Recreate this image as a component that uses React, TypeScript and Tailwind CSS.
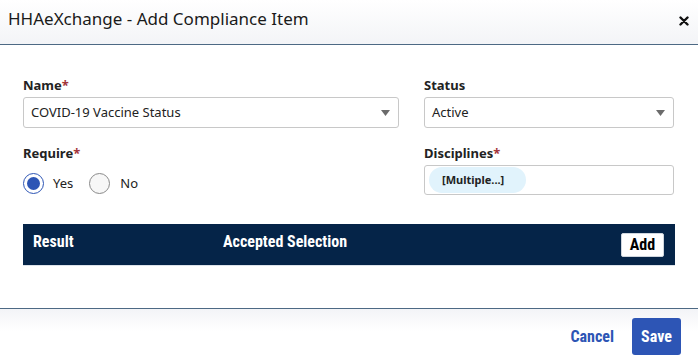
import React from "react";

const sans = { fontFamily: '"Noto Sans", "Open Sans", sans-serif' };
const narrow = { fontFamily: '"Liberation Sans Narrow", "Roboto Condensed", "Roboto", sans-serif' };

function Caret() {
  return (
    <svg width="9" height="6" viewBox="0 0 9 6" className="shrink-0">
      <path d="M0 0 H9 L4.5 6 Z" fill="#6b6b6b" />
    </svg>
  );
}

function Select({ value }: { value: string }) {
  return (
    <div className="flex h-[31px] items-center justify-between rounded-[3px] border border-[#c8c8c8] bg-white pl-[7px] pr-[8px] text-[13px] text-[#222]">
      <span>{value}</span>
      <Caret />
    </div>
  );
}

function Label({ text, req }: { text: string; req?: boolean }) {
  return (
    <div className="mb-[4px] h-[16px] text-[13px] font-bold leading-[16px] text-[#222]">
      {text}
      {req && <span className="text-[#a3343a]">*</span>}
    </div>
  );
}

export default function App() {
  return (
    <div className="flex h-[364px] w-[698px] flex-col bg-white" style={sans}>
      <div className="flex h-[45px] items-center justify-between border-b-[1.5px] border-[#4d6984] bg-gradient-to-b from-white to-[#f3f4f7] pl-[8px] pr-[9px]">
        <span className="pb-[6px] text-[17px] text-[#1a1a1a]">HHAeXchange - Add Compliance Item</span>
        <svg width="10" height="10" viewBox="0 0 10 10" className="mb-[2px]">
          <path d="M1.5 1.5 L8.5 8.5 M8.5 1.5 L1.5 8.5" stroke="#111" strokeWidth="2.4" strokeLinecap="round" />
        </svg>
      </div>

      <div className="flex-1 px-[23px] pt-[32px]">
        <div className="flex gap-[25px]">
          <div className="w-[376px]">
            <Label text="Name" req />
            <Select value="COVID-19 Vaccine Status" />
          </div>
          <div className="w-[250px]">
            <Label text="Status" />
            <Select value="Active" />
          </div>
        </div>
        <div className="mt-[17px] flex gap-[25px]">
          <div className="w-[376px]">
            <Label text="Require" req />
            <div className="mt-[12px] flex items-center text-[13px] text-[#222]">
              <span className="flex h-[21px] w-[21px] items-center justify-center rounded-full border-[1.5px] border-[#2d55b5] bg-white">
                <span className="h-[13px] w-[13px] rounded-full bg-[#2d55b5]" />
              </span>
              <span className="ml-[9px]">Yes</span>
              <span className="ml-[16px] h-[21px] w-[21px] rounded-full border border-[#8a8a8a] bg-[#f7f7f7]" />
              <span className="ml-[10px]">No</span>
            </div>
          </div>
          <div className="w-[250px]">
            <Label text="Disciplines" req />
            <div className="flex h-[30px] items-center rounded-[3px] border border-[#c8c8c8] bg-white pl-[4px]">
              <span className="flex h-[26px] w-[97px] items-center rounded-full bg-[#e1f3fc] pl-[13px] text-[11px] font-bold text-[#222]">
                [Multiple...]
              </span>
            </div>
          </div>
        </div>

        <div className="mt-[29px] flex h-[42px] items-center border-b border-[#dde3ea] bg-[#052448] pl-[10px] pr-[11px] text-[16px] font-bold text-white" style={narrow}>
          <span className="w-[190px] -mt-[6px]">Result</span>
          <span className="flex-1 -mt-[6px]">Accepted Selection</span>
          <span className="flex h-[24px] w-[43px] items-center justify-center rounded-[2px] border border-[#cfd6de] bg-white text-[16px] text-black">
            Add
          </span>
        </div>
      </div>

      <div className="flex h-[56px] items-center justify-end gap-[18px] border-t-[1.5px] border-[#4d6984] bg-gradient-to-b from-[#f3f4f7] to-white to-40% pr-[17px]">
        <span className="text-[16px] font-bold text-[#2d55b5]" style={narrow}>Cancel</span>
        <span className="flex h-[37px] w-[49px] items-center justify-center rounded-[3px] bg-[#2d55b5] text-[16px] font-bold text-white" style={narrow}>
          Save
        </span>
      </div>
    </div>
  );
}
